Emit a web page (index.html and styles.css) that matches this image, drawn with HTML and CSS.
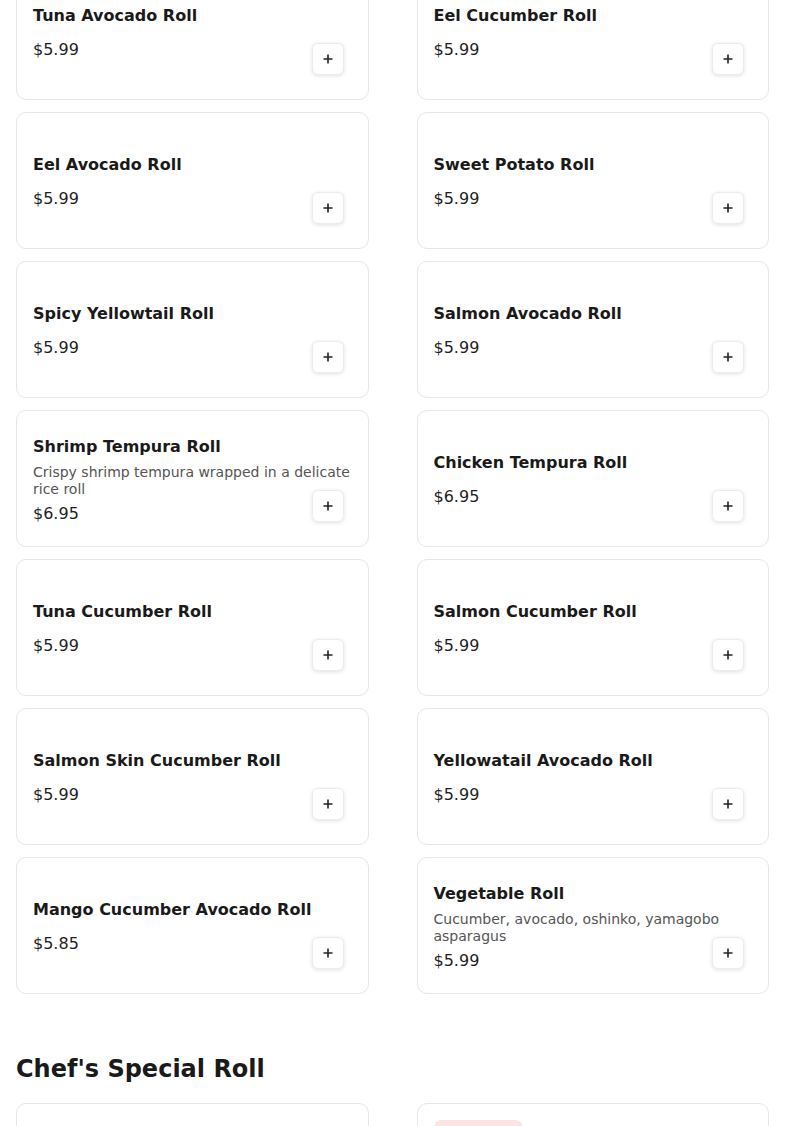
FILE: index.html
```html
<!DOCTYPE html>
<html lang="en">
<head>
<meta charset="utf-8">
<title>Menu</title>
<link rel="stylesheet" href="styles.css">
</head>
<body>
<main class="menu">
  <section class="section section-first">
    <div class="grid">
      <article class="card"><div class="info"><h3 class="title">Tuna Avocado Roll</h3><p class="price">$5.99</p></div><button class="add" aria-label="Add"><svg viewBox="0 0 10 10" width="10" height="10"><path d="M5 0.5v9M0.5 5h9" stroke="#222" stroke-width="1.6" fill="none"/></svg></button></article>
      <article class="card"><div class="info"><h3 class="title">Eel Cucumber Roll</h3><p class="price">$5.99</p></div><button class="add" aria-label="Add"><svg viewBox="0 0 10 10" width="10" height="10"><path d="M5 0.5v9M0.5 5h9" stroke="#222" stroke-width="1.6" fill="none"/></svg></button></article>
      <article class="card"><div class="info"><h3 class="title">Eel Avocado Roll</h3><p class="price">$5.99</p></div><button class="add" aria-label="Add"><svg viewBox="0 0 10 10" width="10" height="10"><path d="M5 0.5v9M0.5 5h9" stroke="#222" stroke-width="1.6" fill="none"/></svg></button></article>
      <article class="card"><div class="info"><h3 class="title">Sweet Potato Roll</h3><p class="price">$5.99</p></div><button class="add" aria-label="Add"><svg viewBox="0 0 10 10" width="10" height="10"><path d="M5 0.5v9M0.5 5h9" stroke="#222" stroke-width="1.6" fill="none"/></svg></button></article>
      <article class="card"><div class="info"><h3 class="title">Spicy Yellowtail Roll</h3><p class="price">$5.99</p></div><button class="add" aria-label="Add"><svg viewBox="0 0 10 10" width="10" height="10"><path d="M5 0.5v9M0.5 5h9" stroke="#222" stroke-width="1.6" fill="none"/></svg></button></article>
      <article class="card"><div class="info"><h3 class="title">Salmon Avocado Roll</h3><p class="price">$5.99</p></div><button class="add" aria-label="Add"><svg viewBox="0 0 10 10" width="10" height="10"><path d="M5 0.5v9M0.5 5h9" stroke="#222" stroke-width="1.6" fill="none"/></svg></button></article>
      <article class="card"><div class="info"><h3 class="title">Shrimp Tempura Roll</h3><p class="desc">Crispy shrimp tempura wrapped in a delicate rice roll</p><p class="price">$6.95</p></div><button class="add" aria-label="Add"><svg viewBox="0 0 10 10" width="10" height="10"><path d="M5 0.5v9M0.5 5h9" stroke="#222" stroke-width="1.6" fill="none"/></svg></button></article>
      <article class="card"><div class="info"><h3 class="title">Chicken Tempura Roll</h3><p class="price">$6.95</p></div><button class="add" aria-label="Add"><svg viewBox="0 0 10 10" width="10" height="10"><path d="M5 0.5v9M0.5 5h9" stroke="#222" stroke-width="1.6" fill="none"/></svg></button></article>
      <article class="card"><div class="info"><h3 class="title">Tuna Cucumber Roll</h3><p class="price">$5.99</p></div><button class="add" aria-label="Add"><svg viewBox="0 0 10 10" width="10" height="10"><path d="M5 0.5v9M0.5 5h9" stroke="#222" stroke-width="1.6" fill="none"/></svg></button></article>
      <article class="card"><div class="info"><h3 class="title">Salmon Cucumber Roll</h3><p class="price">$5.99</p></div><button class="add" aria-label="Add"><svg viewBox="0 0 10 10" width="10" height="10"><path d="M5 0.5v9M0.5 5h9" stroke="#222" stroke-width="1.6" fill="none"/></svg></button></article>
      <article class="card"><div class="info"><h3 class="title">Salmon Skin Cucumber Roll</h3><p class="price">$5.99</p></div><button class="add" aria-label="Add"><svg viewBox="0 0 10 10" width="10" height="10"><path d="M5 0.5v9M0.5 5h9" stroke="#222" stroke-width="1.6" fill="none"/></svg></button></article>
      <article class="card"><div class="info"><h3 class="title">Yellowatail Avocado Roll</h3><p class="price">$5.99</p></div><button class="add" aria-label="Add"><svg viewBox="0 0 10 10" width="10" height="10"><path d="M5 0.5v9M0.5 5h9" stroke="#222" stroke-width="1.6" fill="none"/></svg></button></article>
      <article class="card"><div class="info"><h3 class="title">Mango Cucumber Avocado Roll</h3><p class="price">$5.85</p></div><button class="add" aria-label="Add"><svg viewBox="0 0 10 10" width="10" height="10"><path d="M5 0.5v9M0.5 5h9" stroke="#222" stroke-width="1.6" fill="none"/></svg></button></article>
      <article class="card"><div class="info"><h3 class="title">Vegetable Roll</h3><p class="desc">Cucumber, avocado, oshinko, yamagobo asparagus</p><p class="price">$5.99</p></div><button class="add" aria-label="Add"><svg viewBox="0 0 10 10" width="10" height="10"><path d="M5 0.5v9M0.5 5h9" stroke="#222" stroke-width="1.6" fill="none"/></svg></button></article>
    </div>
  </section>

  <section class="section">
    <h2 class="section-title">Chef's Special Roll</h2>
    <div class="grid">
      <article class="card"><div class="info"><h3 class="title">Dragon Roll</h3><p class="price">$12.95</p></div></article>
      <article class="card card-top"><div class="info"><span class="badge">Spicy</span><h3 class="title">Volcano Roll</h3><p class="price">$13.95</p></div></article>
    </div>
  </section>
</main>
</body>
</html>
```

FILE: styles.css
```css
* { box-sizing: border-box; }

html, body {
  margin: 0;
  padding: 0;
  background: #ffffff;
}

body {
  font-family: "DejaVu Sans", "Liberation Sans", sans-serif;
  color: #1c1c1c;
}

.menu {
  padding: 0 16px;
}

.section-first {
  margin-top: -37px;
}

.section + .section {
  margin-top: 59px;
}

.section-title {
  margin: 0 0 18px;
  font-size: 24px;
  line-height: 32px;
  font-weight: 700;
  color: #1a1a1a;
}

.grid {
  display: grid;
  grid-template-columns: 1fr 1fr;
  column-gap: 48px;
  row-gap: 12px;
}

.card {
  position: relative;
  height: 137px;
  border: 1px solid #e6e6e6;
  border-radius: 10px;
  background: #fff;
  padding: 19px 16px 16px;
  display: flex;
  flex-direction: column;
  justify-content: center;
}

.card-top {
  justify-content: flex-start;
  padding-top: 16px;
}

.info {
  display: flex;
  flex-direction: column;
}

.title {
  margin: 0 0 5px;
  font-size: 16px;
  line-height: 24px;
  font-weight: 700;
  color: #1a1a1a;
}

.desc {
  margin: 0 0 4px;
  font-size: 14px;
  line-height: 17px;
  color: #555;
}

.price {
  margin: 0;
  font-size: 16px;
  line-height: 24px;
  color: #1f1f1f;
}

.title + .price {
  margin-top: 5px;
}

.add {
  position: absolute;
  right: 24px;
  bottom: 24px;
  width: 32px;
  height: 32px;
  padding: 0;
  border: 1px solid #ececec;
  border-radius: 6px;
  background: #fff;
  box-shadow: 0 1px 4px rgba(0, 0, 0, 0.12);
  display: flex;
  align-items: center;
  justify-content: center;
  cursor: pointer;
}

.add svg {
  display: block;
}

.badge {
  align-self: flex-start;
  width: 89px;
  height: 24px;
  margin-bottom: 8px;
  border-radius: 8px;
  background: #fde3e3;
  color: #d33;
  font-size: 12px;
  line-height: 16px;
  padding-top: 4px;
  text-align: center;
  overflow: hidden;
}
```
